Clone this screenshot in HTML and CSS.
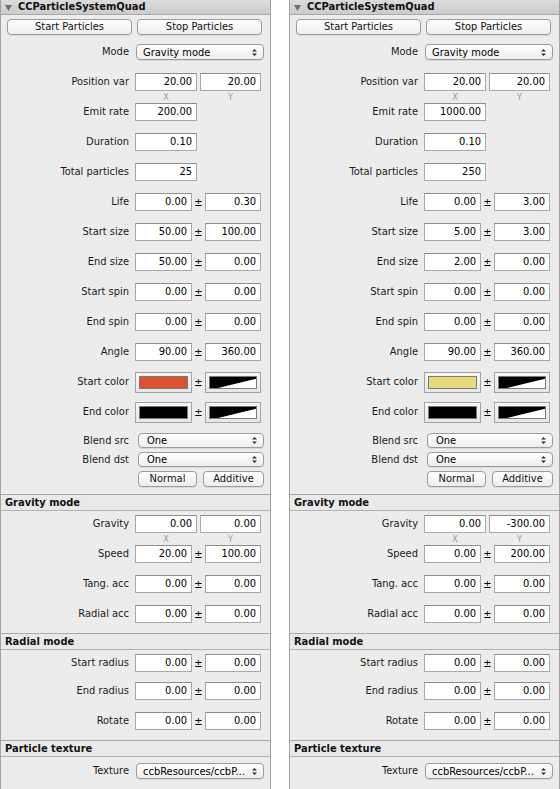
FILE: index.html
```html
<!DOCTYPE html>
<html>
<head>
<meta charset="utf-8">
<link rel="stylesheet" href="styles.css">
</head>
<body>
<div class="wrap">
  <section class="panel">
    <div class="titlebar"><svg class="tri" width="7" height="6" viewBox="0 0 7 6"><polygon points="0,0 7,0 3.5,6" fill="#707070"/></svg><span>CCParticleSystemQuad</span></div>
    <div class="btnrow"><div class="btn">Start Particles</div><div class="btn">Stop Particles</div></div>
    <div class="row"><span class="lbl">Mode</span><div class="popup pop-wide"><span>Gravity mode</span><svg class="arr" width="7" height="9" viewBox="0 0 7 9"><path d="M1 3.5 L3.5 1 L6 3.5Z M1 5.5 L3.5 8 L6 5.5Z" fill="#333"/></svg></div></div>
    <div class="row row-xy"><span class="lbl">Position var</span><div class="xy"><div class="pair"><span class="field f62">20.00</span><span class="field f61">20.00</span></div><div class="axis"><span>X</span><span>Y</span></div></div></div>
    <div class="row"><span class="lbl">Emit rate</span><span class="field f62">200.00</span></div>
    <div class="row"><span class="lbl">Duration</span><span class="field f62">0.10</span></div>
    <div class="row"><span class="lbl">Total particles</span><span class="field f62">25</span></div>
    <div class="row"><span class="lbl">Life</span><span class="field f57">0.00</span><span class="pm">±</span><span class="field f56">0.30</span></div>
    <div class="row"><span class="lbl">Start size</span><span class="field f57">50.00</span><span class="pm">±</span><span class="field f56">100.00</span></div>
    <div class="row"><span class="lbl">End size</span><span class="field f57">50.00</span><span class="pm">±</span><span class="field f56">0.00</span></div>
    <div class="row"><span class="lbl">Start spin</span><span class="field f57">0.00</span><span class="pm">±</span><span class="field f56">0.00</span></div>
    <div class="row"><span class="lbl">End spin</span><span class="field f57">0.00</span><span class="pm">±</span><span class="field f56">0.00</span></div>
    <div class="row"><span class="lbl">Angle</span><span class="field f57">90.00</span><span class="pm">±</span><span class="field f56">360.00</span></div>
    <div class="row"><span class="lbl">Start color</span><span class="well f57"><span class="swatch" style="background:#db5230"></span></span><span class="pm">±</span><span class="well f56"><span class="swatch ramp"><svg width="100%" height="100%" viewBox="0 0 46 12" preserveAspectRatio="none"><polygon points="0,0 46,0 46,2 8,12 0,12" fill="#000"/></svg></span></span></div>
    <div class="row"><span class="lbl">End color</span><span class="well f57"><span class="swatch" style="background:#000000"></span></span><span class="pm">±</span><span class="well f56"><span class="swatch ramp"><svg width="100%" height="100%" viewBox="0 0 46 12" preserveAspectRatio="none"><polygon points="0,0 46,0 46,2 8,12 0,12" fill="#000"/></svg></span></span></div>
    <div class="blend">
      <div class="row-sm"><span class="lbl">Blend src</span><div class="popup pop-blend"><span>One</span><svg class="arr" width="7" height="9" viewBox="0 0 7 9"><path d="M1 3.5 L3.5 1 L6 3.5Z M1 5.5 L3.5 8 L6 5.5Z" fill="#333"/></svg></div></div>
      <div class="row-sm"><span class="lbl">Blend dst</span><div class="popup pop-blend"><span>One</span><svg class="arr" width="7" height="9" viewBox="0 0 7 9"><path d="M1 3.5 L3.5 1 L6 3.5Z M1 5.5 L3.5 8 L6 5.5Z" fill="#333"/></svg></div></div>
      <div class="row-sm"><span class="lbl"></span><div class="btn sm b-normal">Normal</div><div class="btn sm b-add">Additive</div></div>
    </div>
    <div class="sechead">Gravity mode</div>
    <div class="sec">
      <div class="row row-grav"><span class="lbl">Gravity</span><div class="xy"><div class="pair"><span class="field f62">0.00</span><span class="field f61">0.00</span></div><div class="axis"><span>X</span><span>Y</span></div></div></div>
      <div class="row"><span class="lbl">Speed</span><span class="field f57">20.00</span><span class="pm">±</span><span class="field f56">100.00</span></div>
      <div class="row"><span class="lbl">Tang. acc</span><span class="field f57">0.00</span><span class="pm">±</span><span class="field f56">0.00</span></div>
      <div class="row"><span class="lbl">Radial acc</span><span class="field f57">0.00</span><span class="pm">±</span><span class="field f56">0.00</span></div>
    </div>
    <div class="sechead">Radial mode</div>
    <div class="sec">
      <div class="row row-first"><span class="lbl">Start radius</span><span class="field f57">0.00</span><span class="pm">±</span><span class="field f56">0.00</span></div>
      <div class="row"><span class="lbl">End radius</span><span class="field f57">0.00</span><span class="pm">±</span><span class="field f56">0.00</span></div>
      <div class="row"><span class="lbl">Rotate</span><span class="field f57">0.00</span><span class="pm">±</span><span class="field f56">0.00</span></div>
    </div>
    <div class="sechead">Particle texture</div>
    <div class="row row-tex"><span class="lbl">Texture</span><div class="popup pop-wide"><span>ccbResources/ccbP...</span><svg class="arr" width="7" height="9" viewBox="0 0 7 9"><path d="M1 3.5 L3.5 1 L6 3.5Z M1 5.5 L3.5 8 L6 5.5Z" fill="#333"/></svg></div></div>
  </section>

  <section class="panel">
    <div class="titlebar"><svg class="tri" width="7" height="6" viewBox="0 0 7 6"><polygon points="0,0 7,0 3.5,6" fill="#707070"/></svg><span>CCParticleSystemQuad</span></div>
    <div class="btnrow"><div class="btn">Start Particles</div><div class="btn">Stop Particles</div></div>
    <div class="row"><span class="lbl">Mode</span><div class="popup pop-wide"><span>Gravity mode</span><svg class="arr" width="7" height="9" viewBox="0 0 7 9"><path d="M1 3.5 L3.5 1 L6 3.5Z M1 5.5 L3.5 8 L6 5.5Z" fill="#333"/></svg></div></div>
    <div class="row row-xy"><span class="lbl">Position var</span><div class="xy"><div class="pair"><span class="field f62">20.00</span><span class="field f61">20.00</span></div><div class="axis"><span>X</span><span>Y</span></div></div></div>
    <div class="row"><span class="lbl">Emit rate</span><span class="field f62">1000.00</span></div>
    <div class="row"><span class="lbl">Duration</span><span class="field f62">0.10</span></div>
    <div class="row"><span class="lbl">Total particles</span><span class="field f62">250</span></div>
    <div class="row"><span class="lbl">Life</span><span class="field f57">0.00</span><span class="pm">±</span><span class="field f56">3.00</span></div>
    <div class="row"><span class="lbl">Start size</span><span class="field f57">5.00</span><span class="pm">±</span><span class="field f56">3.00</span></div>
    <div class="row"><span class="lbl">End size</span><span class="field f57">2.00</span><span class="pm">±</span><span class="field f56">0.00</span></div>
    <div class="row"><span class="lbl">Start spin</span><span class="field f57">0.00</span><span class="pm">±</span><span class="field f56">0.00</span></div>
    <div class="row"><span class="lbl">End spin</span><span class="field f57">0.00</span><span class="pm">±</span><span class="field f56">0.00</span></div>
    <div class="row"><span class="lbl">Angle</span><span class="field f57">90.00</span><span class="pm">±</span><span class="field f56">360.00</span></div>
    <div class="row"><span class="lbl">Start color</span><span class="well f57"><span class="swatch" style="background:#ead97a"></span></span><span class="pm">±</span><span class="well f56"><span class="swatch ramp"><svg width="100%" height="100%" viewBox="0 0 46 12" preserveAspectRatio="none"><polygon points="0,0 46,0 46,2 8,12 0,12" fill="#000"/></svg></span></span></div>
    <div class="row"><span class="lbl">End color</span><span class="well f57"><span class="swatch" style="background:#000000"></span></span><span class="pm">±</span><span class="well f56"><span class="swatch ramp"><svg width="100%" height="100%" viewBox="0 0 46 12" preserveAspectRatio="none"><polygon points="0,0 46,0 46,2 8,12 0,12" fill="#000"/></svg></span></span></div>
    <div class="blend">
      <div class="row-sm"><span class="lbl">Blend src</span><div class="popup pop-blend"><span>One</span><svg class="arr" width="7" height="9" viewBox="0 0 7 9"><path d="M1 3.5 L3.5 1 L6 3.5Z M1 5.5 L3.5 8 L6 5.5Z" fill="#333"/></svg></div></div>
      <div class="row-sm"><span class="lbl">Blend dst</span><div class="popup pop-blend"><span>One</span><svg class="arr" width="7" height="9" viewBox="0 0 7 9"><path d="M1 3.5 L3.5 1 L6 3.5Z M1 5.5 L3.5 8 L6 5.5Z" fill="#333"/></svg></div></div>
      <div class="row-sm"><span class="lbl"></span><div class="btn sm b-normal">Normal</div><div class="btn sm b-add">Additive</div></div>
    </div>
    <div class="sechead">Gravity mode</div>
    <div class="sec">
      <div class="row row-grav"><span class="lbl">Gravity</span><div class="xy"><div class="pair"><span class="field f62">0.00</span><span class="field f61">-300.00</span></div><div class="axis"><span>X</span><span>Y</span></div></div></div>
      <div class="row"><span class="lbl">Speed</span><span class="field f57">0.00</span><span class="pm">±</span><span class="field f56">200.00</span></div>
      <div class="row"><span class="lbl">Tang. acc</span><span class="field f57">0.00</span><span class="pm">±</span><span class="field f56">0.00</span></div>
      <div class="row"><span class="lbl">Radial acc</span><span class="field f57">0.00</span><span class="pm">±</span><span class="field f56">0.00</span></div>
    </div>
    <div class="sechead">Radial mode</div>
    <div class="sec">
      <div class="row row-first"><span class="lbl">Start radius</span><span class="field f57">0.00</span><span class="pm">±</span><span class="field f56">0.00</span></div>
      <div class="row"><span class="lbl">End radius</span><span class="field f57">0.00</span><span class="pm">±</span><span class="field f56">0.00</span></div>
      <div class="row"><span class="lbl">Rotate</span><span class="field f57">0.00</span><span class="pm">±</span><span class="field f56">0.00</span></div>
    </div>
    <div class="sechead">Particle texture</div>
    <div class="row row-tex"><span class="lbl">Texture</span><div class="popup pop-wide"><span>ccbResources/ccbP...</span><svg class="arr" width="7" height="9" viewBox="0 0 7 9"><path d="M1 3.5 L3.5 1 L6 3.5Z M1 5.5 L3.5 8 L6 5.5Z" fill="#333"/></svg></div></div>
  </section>
</div>
</body>
</html>
```

FILE: styles.css
```css
html, body {
  margin: 0;
  padding: 0;
  background: #ffffff;
}
body {
  width: 560px;
  height: 789px;
  overflow: hidden;
  font-family: "Lucida Grande", "DejaVu Sans Condensed", "Liberation Sans", sans-serif;
  font-size: 11px;
  color: #1a1a1a;
}
.wrap {
  display: flex;
  gap: 18px;
}
.panel {
  box-sizing: border-box;
  width: 271px;
  height: 789px;
  background: #ececec;
  border-left: 1px solid #a3a3a3;
  border-right: 1px solid #a3a3a3;
  display: flex;
  flex-direction: column;
}
.titlebar {
  height: 14px;
  border-bottom: 1px solid #a9a9a9;
  background: linear-gradient(#dcdcdc, #cbcbcb);
  display: flex;
  align-items: center;
  padding-left: 4px;
  font-weight: bold;
  line-height: 14px;
  color: #111;
}
.tri {
  margin-right: 6px;
  margin-top: 1px;
}
.btnrow {
  display: flex;
  gap: 5px;
  padding: 4px 0 2px 6px;
}
.btn {
  box-sizing: border-box;
  width: 125px;
  height: 16px;
  border: 1px solid #9b9b9b;
  border-radius: 4px;
  background: linear-gradient(#ffffff, #ededed);
  box-shadow: 0 1px 0 rgba(0,0,0,0.08);
  text-align: center;
  line-height: 14px;
  color: #111;
}
.btn.sm {
  height: 16px;
}
.b-normal {
  width: 59px;
  margin-left: 3px;
}
.b-add {
  width: 61px;
  margin-left: 6px;
}
.row {
  box-sizing: border-box;
  height: 30px;
  display: flex;
  align-items: center;
}
.row-sm {
  height: 19px;
  display: flex;
  align-items: center;
}
.lbl {
  width: 128px;
  margin-right: 6px;
  text-align: right;
  flex: none;
  line-height: 18px;
}
.field {
  box-sizing: border-box;
  height: 18px;
  border: 1px solid #a8a8a8;
  border-top-color: #8e8e8e;
  background: #ffffff;
  text-align: right;
  padding-right: 4px;
  line-height: 16px;
  color: #000;
  flex: none;
}
.f62 { width: 62px; }
.f61 { width: 61px; }
.f57 { width: 57px; }
.f56 { width: 56px; }
.pm {
  width: 13px;
  text-align: center;
  flex: none;
  color: #000;
}
.pair {
  display: flex;
  gap: 3px;
}
.axis {
  display: flex;
  gap: 3px;
  margin-top: 1px;
  font-size: 9px;
  line-height: 10px;
  color: #9a9a9a;
}
.axis span {
  width: 62px;
  text-align: center;
}
.axis span + span {
  width: 61px;
}
.row-xy {
  align-items: flex-start;
  padding-top: 6px;
}
.row-grav {
  height: 28px;
  align-items: flex-start;
  padding-top: 4px;
}
.row-first {
  height: 26px;
}
.row-tex {
  height: 28px;
}
.popup {
  box-sizing: border-box;
  display: flex;
  align-items: center;
  justify-content: space-between;
  border: 1px solid #9b9b9b;
  border-radius: 4px;
  background: linear-gradient(#ffffff, #eeeeee);
  box-shadow: 0 1px 0 rgba(0,0,0,0.08);
  color: #000;
  flex: none;
}
.pop-wide {
  width: 128px;
  height: 16px;
  margin-left: 1px;
  padding: 0 5px 0 6px;
}
.pop-blend {
  width: 126px;
  height: 15px;
  margin-left: 3px;
  padding: 0 5px 0 8px;
}
.arr {
  flex: none;
}
.well {
  box-sizing: border-box;
  height: 21px;
  border: 1px solid #a3a3a3;
  background: linear-gradient(#f7f7f7, #e6e6e6);
  padding: 3px;
  display: flex;
  flex: none;
}
.swatch {
  flex: 1;
  border: 1px solid #7a7a7a;
  display: block;
}
.ramp {
  background: #ffffff;
  display: flex;
}
.ramp svg {
  display: block;
}
.blend {
  padding: 4px 0 6px;
}
.sechead {
  height: 15px;
  border-top: 1px solid #a9a9a9;
  border-bottom: 1px solid #b3b3b3;
  background: #e9e9e9;
  padding-left: 4px;
  font-weight: bold;
  line-height: 15px;
  color: #111;
}
.sec {
  padding-bottom: 4px;
}
```
